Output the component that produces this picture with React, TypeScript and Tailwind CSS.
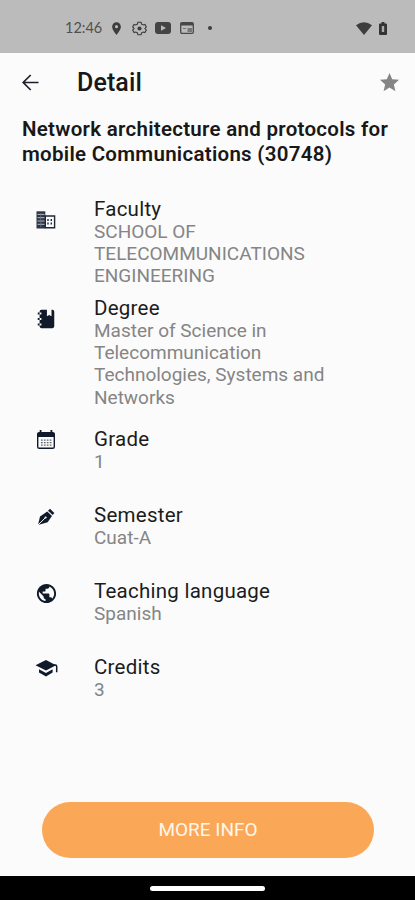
import type { ReactNode } from 'react';
import { MdStar, MdLocationOn, MdPublic } from 'react-icons/md';

function Row({ icon, title, lines, height, iconTop }: { icon: ReactNode; title: string; lines: string[]; height: string; iconTop: string }) {
  return (
    <div className={`flex items-start ${height}`}>
      <div className={`flex w-[72px] shrink-0 pl-[13px] text-[#101a2b] ${iconTop}`}>
        <div className="flex size-[22px] items-center justify-center">{icon}</div>
      </div>
      <div>
        <div className="text-[20.5px] leading-[23px] tracking-[0.25px] whitespace-nowrap text-[#1c1c1c]">{title}</div>
        {lines.map((l) => (
          <div key={l} className="text-[19px] leading-[22.2px] whitespace-nowrap text-[#858585]">{l}</div>
        ))}
      </div>
    </div>
  );
}

const Building = () => (
  <svg viewBox="0 0 22 22" className="size-[22px]">
    <path d="M1.5 2.3h8.8v17.2H1.5z" fill="#2b3546" />
    <path d="M10.3 7h9.3v11.8h-9.3z" fill="none" stroke="#1d2839" strokeWidth="1.4" />
    <path d="M2.5 5.4h7M2.5 8.7h7M2.5 12h7M2.5 15.3h7" stroke="#b9bec8" strokeWidth="1" />
    <path d="M5.8 4v14" stroke="#6d7584" strokeWidth=".8" />
    <path d="M13 10v7M16.3 10v7" stroke="#1d2839" strokeWidth="1.4" strokeDasharray="2 1.5" />
  </svg>
);

const Notebook = () => (
  <svg viewBox="0 0 24 24" className="size-[22px]" fill="currentColor">
    <path d="M3 7V5h2V4a2 2 0 0 1 2-2h6v7l2.5-1.5L18 9V2h1c1.05 0 2 .95 2 2v16c0 1.05-.95 2-2 2H7c-1.05 0-2-.95-2-2v-1H3v-2h2v-4H3v-2h2V7H3m4 4H5v2h2v-2m0-4V5H5v2h2m0 12v-2H5v2h2z" />
  </svg>
);

const Calendar = () => (
  <svg viewBox="0 0 22 22" className="size-[22px]" fill="none" stroke="currentColor">
    <rect x="2.7" y="3.7" width="16.6" height="15.6" rx="1.6" strokeWidth="1.4" />
    <path d="M2.5 4h17v4h-17z" fill="currentColor" stroke="none" />
    <path d="M5.6 1v4M16.4 1v4" strokeWidth="1.8" />
    <path d="M6 11.2h10.5M6 13.7h10.5M6 16.2h10.5" stroke="#5d6573" strokeWidth="1.3" strokeDasharray="1.7 1.2" />
  </svg>
);

const PenTip = () => (
  <svg viewBox="0 0 22 22" className="size-[22px]" fill="currentColor">
    <path d="M3 19L5 10.500 12.200 5.600 17 10 12.600 16.200z" />
    <path d="M13 4.700L15 2.800 19.300 7 17.700 9z" />
    <path d="M3 19L10.300 11.800" stroke="#fbfbfb" strokeWidth="1" />
    <circle cx="10.600" cy="11.500" r="1.100" fill="#fbfbfb" />
  </svg>
);

const Cap = () => (
  <svg viewBox="0 0 24 22" className="h-[22px] w-[24px] shrink-0" fill="currentColor">
    <path d="M1.500 8.300L12 3 22 8.300 12 13.500z" />
    <path d="M5 12.300L12 15.900 18.600 12.300V15.600L12 19.500 5 15.600z" />
    <path d="M19.500 8h1.700q1.500 0 1.500 1.600v5.700" fill="none" stroke="currentColor" strokeWidth="1.500" />
  </svg>
);

export default function App() {
  return (
    <div className="flex h-[900px] w-[415px] flex-col overflow-hidden bg-[#fbfbfb] font-[Roboto,sans-serif]">
      <div className="flex h-[53px] shrink-0 items-center bg-[#bbbbbb] pt-[3px] pr-[28px] pl-[65px] text-[#3d3d3d]">
        <span className="w-[44px] font-[Lato,sans-serif] text-[14.5px] leading-none whitespace-nowrap text-[#505050]">12:46</span>
        <MdLocationOn className="size-[15px]" />
        <svg viewBox="0 0 16 16" className="ml-[8px] size-[15px]" fill="none" stroke="currentColor">
          <path d="M6.3 1.3h3.4l.5 2 1.7.9 1.9-.6 1.5 2.8L13.8 8l1.5 1.6-1.5 2.8-1.9-.6-1.7.9-.5 2H6.3l-.5-2-1.7-.9-1.9.6-1.5-2.8L2.200 8 .7 6.4l1.5-2.8 1.9.6 1.7-.9z" strokeWidth="1.2" />
          <circle cx="8" cy="8" r="2.2" fill="currentColor" stroke="none" />
        </svg>
        <svg viewBox="0 0 16 12" className="ml-[8px] h-[12px] w-[16px]">
          <rect width="16" height="12" rx="3" fill="#444" />
          <path d="M6 3.3v5.4L11 6z" fill="#bbb" />
        </svg>
        <svg viewBox="0 0 14 12" className="ml-[9px] h-[12px] w-[14px]">
          <rect x=".7" y=".7" width="12.6" height="10.6" rx="1.2" fill="none" stroke="#484848" strokeWidth="1.3" />
          <path d="M1 1h12v2.500H1z" fill="#484848" />
          <path d="M3 6h3v1H3zM7.5 6H12v4H7.5z" fill="#777" />
        </svg>
        <span className="ml-[14px] size-[4px] rounded-full bg-[#3d3d3d]" />
        <svg viewBox="0 0 16 13" className="ml-auto h-[13px] w-[16px]" fill="currentColor">
          <path d="M0 3.2Q8-2.8 16 3.2L8 13z" />
        </svg>
        <svg viewBox="0 0 8 13" className="ml-[7px] h-[13px] w-[8px]">
          <path d="M0 2.4Q0 1.4 1 1.4h1.5V0h3v1.4H7q1 0 1 1V12q0 1-1 1H1q-1 0-1-1z" fill="#333" />
          <path d="M2.800 4h2.400v6H2.800z" fill="#aaa" />
        </svg>
      </div>
      <div className="flex h-[59px] shrink-0 items-center pr-[14px] pl-[22px]">
        <svg viewBox="0 0 17 17" className="size-[17px] text-[#1f1f2b]" fill="none" stroke="currentColor" strokeWidth="1.700">
          <path d="M16.500 8.500H1.200M8.700 1L1.200 8.500 8.700 16" />
        </svg>
        <h1 className="ml-[38px] text-[25px] leading-[30px] font-medium tracking-[0.1px] text-[#181818]">Detail</h1>
        <MdStar className="ml-auto size-[23px] text-[#858585]" />
      </div>
      <h2 className="h-[86px] shrink-0 pt-[5px] pl-[22px] text-[20.5px] leading-[24.5px] font-semibold tracking-[0.28px] whitespace-nowrap text-[#181818]">
        Network architecture and protocols for
        <br />
        mobile Communications (30748)
      </h2>
      <main className="flex flex-1 flex-col pl-[22px]">
        <Row height="h-[99px]" iconTop="pt-[11px]" icon={<Building />} title="Faculty" lines={['SCHOOL OF', 'TELECOMMUNICATIONS', 'ENGINEERING']} />
        <Row height="h-[131px]" iconTop="pt-[11px]" icon={<Notebook />} title="Degree" lines={['Master of Science in', 'Telecommunication', 'Technologies, Systems and', 'Networks']} />
        <Row height="h-[76px]" iconTop="pt-[1px]" icon={<Calendar />} title="Grade" lines={['1']} />
        <Row height="h-[76px]" iconTop="pt-[2px]" icon={<PenTip />} title="Semester" lines={['Cuat-A']} />
        <Row height="h-[76px]" iconTop="pt-[2px]" icon={<MdPublic className="size-[23px] shrink-0" />} title="Teaching language" lines={['Spanish']} />
        <Row height="h-[76px]" iconTop="pt-[1px]" icon={<Cap />} title="Credits" lines={['3']} />
      </main>
      <button className="mr-[41px] mb-[18px] ml-[42px] h-[56px] shrink-0 rounded-full bg-[#fba758] text-[19px] text-[#fff6ea]">MORE INFO</button>
      <div className="flex h-[24px] shrink-0 items-center justify-center bg-black">
        <div className="h-[5px] w-[115px] rounded-full bg-white" />
      </div>
    </div>
  );
}
